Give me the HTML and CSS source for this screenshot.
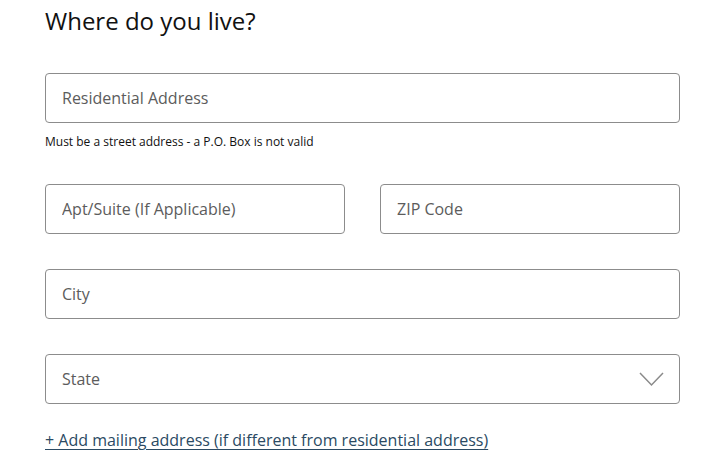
FILE: index.html
```html
<!DOCTYPE html>
<html lang="en">
<head>
  <meta charset="UTF-8">
  <meta name="viewport" content="width=device-width, initial-scale=1.0">
  <title>Where do you live?</title>
  <link rel="stylesheet" href="styles.css">
</head>
<body>
  <section class="address-form">
    <h2>Where do you live?</h2>

    <div class="field field-hinted">
      <input type="text" class="text-input" placeholder="Residential Address">
      <p class="hint">Must be a street address - a P.O. Box is not valid</p>
    </div>

    <div class="row">
      <input type="text" class="text-input" placeholder="Apt/Suite (If Applicable)">
      <input type="text" class="text-input" placeholder="ZIP Code">
    </div>

    <div class="field">
      <input type="text" class="text-input" placeholder="City">
    </div>

    <div class="field select-wrap">
      <select class="text-input state-select">
        <option>State</option>
      </select>
      <svg class="chevron" width="25" height="15" viewBox="0 0 25 15">
        <polyline points="1,1 12.5,13 24,1" fill="none" stroke="#8a8a8a" stroke-width="1.5"/>
      </svg>
    </div>

    <a href="#" class="add-link">+ Add mailing address (if different from residential address)</a>
  </section>
</body>
</html>
```

FILE: styles.css
```css
body {
  margin: 0;
  font-family: "Open Sans", "Noto Sans", sans-serif;
  color: #111;
  background: #fff;
}
.address-form {
  width: 635px;
  padding: 0 0 0 45px;
}
h2 {
  font-size: 24px;
  font-weight: 400;
  margin: 4px 0 35px;
  line-height: 34px;
}
.field {
  margin-bottom: 35px;
}
.field-hinted {
  margin-bottom: 33px;
}
.text-input {
  display: block;
  width: 100%;
  height: 50px;
  box-sizing: border-box;
  border: 1px solid #8c8c8c;
  border-radius: 4px;
  padding: 0 16px;
  font-family: "Open Sans", "Noto Sans", sans-serif;
  font-size: 16px;
  color: #555;
  background: #fff;
  outline: none;
}
.text-input::placeholder {
  color: #5c5c5c;
}
.hint {
  font-size: 12px;
  margin: 10px 0 0;
  line-height: 18px;
}
.row {
  display: flex;
  gap: 35px;
  margin-bottom: 35px;
}
.row .text-input {
  flex: 1;
}
.select-wrap {
  position: relative;
  margin-bottom: 25px;
}
.state-select {
  appearance: none;
  -webkit-appearance: none;
  color: #5c5c5c;
}
.chevron {
  position: absolute;
  right: 16px;
  top: 18px;
  pointer-events: none;
}
.add-link {
  font-size: 16px;
  color: #2b4a63;
  text-decoration: underline;
  text-underline-offset: 3px;
}
```
